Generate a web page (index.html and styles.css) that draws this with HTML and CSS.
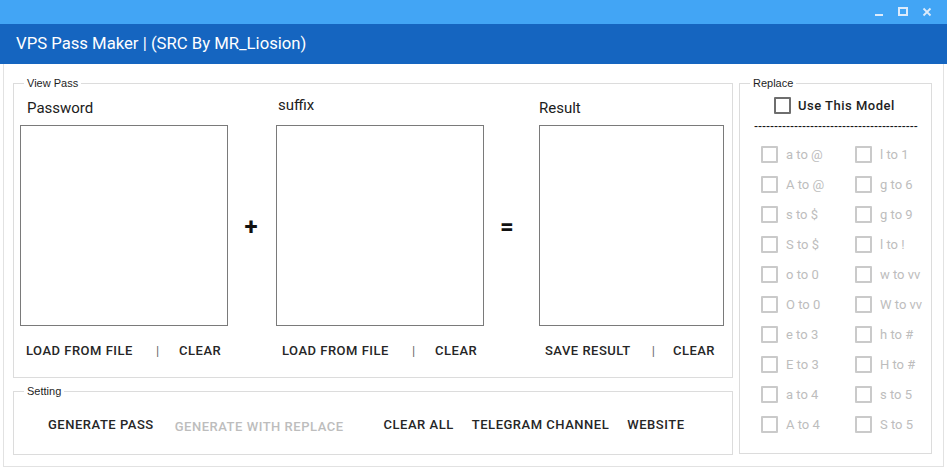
FILE: index.html
```html
<!DOCTYPE html>
<html>
<head>
<meta charset="utf-8">
<link rel="stylesheet" href="styles.css">
</head>
<body>
<div class="window">
  <div class="titlebar">
    <svg class="winctl" width="72" height="24" viewBox="0 0 72 24">
      <rect x="0" y="14" width="8" height="2" fill="#dcebfb"/>
      <rect x="24" y="8" width="8" height="7" fill="none" stroke="#dcebfb" stroke-width="2"/>
      <path d="M48.5 8.5 L55.5 15.5 M55.5 8.5 L48.5 15.5" stroke="#dcebfb" stroke-width="1.8" fill="none"/>
    </svg>
  </div>
  <div class="header"><span class="title">VPS Pass Maker | (SRC By MR_Liosion)</span></div>
  <div class="main">
    <div class="left">
      <section class="group viewpass">
        <span class="legend">View Pass</span>
        <div class="pane">
          <div class="col col-pass">
            <div class="lbl lbl-pass">Password</div>
            <div class="box"></div>
            <div class="actions"><span class="btn">LOAD FROM FILE</span><span class="sep">|</span><span class="btn">CLEAR</span></div>
          </div>
          <div class="op op-plus">+</div>
          <div class="col col-suffix">
            <div class="lbl lbl-suffix">suffix</div>
            <div class="box"></div>
            <div class="actions"><span class="btn">LOAD FROM FILE</span><span class="sep">|</span><span class="btn">CLEAR</span></div>
          </div>
          <div class="op op-eq">=</div>
          <div class="col col-result">
            <div class="lbl lbl-result">Result</div>
            <div class="box"></div>
            <div class="actions actions-result"><span class="btn">SAVE RESULT</span><span class="sep">|</span><span class="btn">CLEAR</span></div>
          </div>
        </div>
      </section>
      <section class="group setting">
        <span class="legend">Setting</span>
        <div class="setting-row">
          <span class="sbtn gen">GENERATE PASS</span>
          <span class="sbtn disabled">GENERATE WITH REPLACE</span>
          <span class="sbtn clear-all">CLEAR ALL</span>
          <span class="sbtn">TELEGRAM CHANNEL</span>
          <span class="sbtn">WEBSITE</span>
        </div>
      </section>
    </div>
    <section class="group replace">
      <span class="legend">Replace</span>
      <div class="model"><span class="cb"></span><span class="model-text">Use This Model</span></div>
      <div class="dashes">-----------------------------------------</div>
      <div class="grid">
        <div class="opt"><span class="cb"></span>a to @</div>
        <div class="opt"><span class="cb"></span>l to 1</div>
        <div class="opt"><span class="cb"></span>A to @</div>
        <div class="opt"><span class="cb"></span>g to 6</div>
        <div class="opt"><span class="cb"></span>s to $</div>
        <div class="opt"><span class="cb"></span>g to 9</div>
        <div class="opt"><span class="cb"></span>S to $</div>
        <div class="opt"><span class="cb"></span>l to !</div>
        <div class="opt"><span class="cb"></span>o to 0</div>
        <div class="opt"><span class="cb"></span>w to vv</div>
        <div class="opt"><span class="cb"></span>O to 0</div>
        <div class="opt"><span class="cb"></span>W to vv</div>
        <div class="opt"><span class="cb"></span>e to 3</div>
        <div class="opt"><span class="cb"></span>h to #</div>
        <div class="opt"><span class="cb"></span>E to 3</div>
        <div class="opt"><span class="cb"></span>H to #</div>
        <div class="opt"><span class="cb"></span>a to 4</div>
        <div class="opt"><span class="cb"></span>s to 5</div>
        <div class="opt"><span class="cb"></span>A to 4</div>
        <div class="opt"><span class="cb"></span>S to 5</div>
      </div>
    </section>
  </div>
</div>
</body>
</html>
```
FILE: styles.css
```css
* { box-sizing: border-box; }
body { margin: 0; font-family: Roboto, "Liberation Sans", sans-serif; background: #fff; }
.window { width: 947px; height: 467px; display: flex; flex-direction: column; background: #fff; overflow: hidden; }
.titlebar { height: 24px; flex: none; background: #42a5f5; display: flex; justify-content: flex-end; }
.winctl { display: block; }
.header { height: 40px; flex: none; background: #1565c0; display: flex; align-items: center; padding: 0 0 1px 16px; color: #fff; font-size: 16.7px; }
.main { flex: 1; margin: 0 3px; border: 1px solid #e2e2e2; border-top: 0; display: flex; align-items: flex-start; gap: 6px; padding: 19px 0 0 9px; }
.left { width: 720px; display: flex; flex-direction: column; gap: 13px; }
.group { border: 1px solid #dcdcdc; position: relative; }
.legend { position: absolute; top: -8px; left: 10px; padding: 0 3px; background: #fff; font: 11px/14px "Liberation Sans", Arial, sans-serif; color: #1e1e1e; }

.viewpass { height: 295px; padding: 15px 0 0 6px; }
.pane { display: flex; align-items: flex-start; }
.col { display: flex; flex-direction: column; }
.col-pass, .col-suffix { width: 208px; }
.col-result { width: 185px; }
.lbl { font-size: 15px; line-height: 18px; height: 18px; margin-bottom: 8px; color: #202020; }
.lbl-pass { padding-left: 7px; }
.lbl-suffix { padding-left: 2px; margin-top: -3px; margin-bottom: 11px; }
.box { height: 201px; border: 1px solid #7a7a7a; background: #fff; }
.actions { display: flex; margin-top: 17px; line-height: 16px; font-size: 13px; font-weight: 500; padding-left: 6px; color: #262626; }
.btn { letter-spacing: 0.5px; }
.sep { margin: 0 20px 0 23px; font-weight: 400; color: #6a6a6a; }
.actions-result .sep { margin: 0 18px 0 21px; }
.op { font: 700 24px/24px Roboto, sans-serif; color: #111; margin-top: 116px; text-align: center; }
.op-plus { width: 46px; margin-right: 2px; }
.op-eq { width: 46px; margin-right: 9px; }

.setting { height: 64px; padding: 25px 0 0 34px; }
.setting-row { display: flex; align-items: flex-start; font-size: 13px; font-weight: 500; line-height: 16px; color: #262626; }
.sbtn { letter-spacing: 0.52px; margin-right: 18px; }
.sbtn.gen { margin-right: 21px; }
.sbtn.disabled { color: #bdbdbd; margin-top: 2px; margin-right: 40px; }

.replace { width: 193px; height: 371px; padding-top: 13px; }
.model { display: flex; align-items: center; gap: 7px; padding-left: 34px; height: 17px; }
.cb { width: 17px; height: 17px; border: 2px solid #6e6e6e; border-radius: 1px; flex: none; background: #fff; }
.model-text { font-size: 13px; font-weight: 500; color: #1e1e1e; letter-spacing: 0.5px; }
.dashes { margin: 6px 0 0 14px; width: 166px; overflow: hidden; white-space: nowrap; font: 12px/12px "Liberation Sans", sans-serif; color: #111; letter-spacing: 0; }
.grid { display: grid; grid-template-columns: 94px 94px; grid-auto-rows: 30px; padding-left: 21px; margin-top: 7px; }
.opt { display: flex; align-items: center; gap: 8px; color: #bdbdbd; font-size: 13px; }
.opt .cb { border-color: #cacaca; }
```
